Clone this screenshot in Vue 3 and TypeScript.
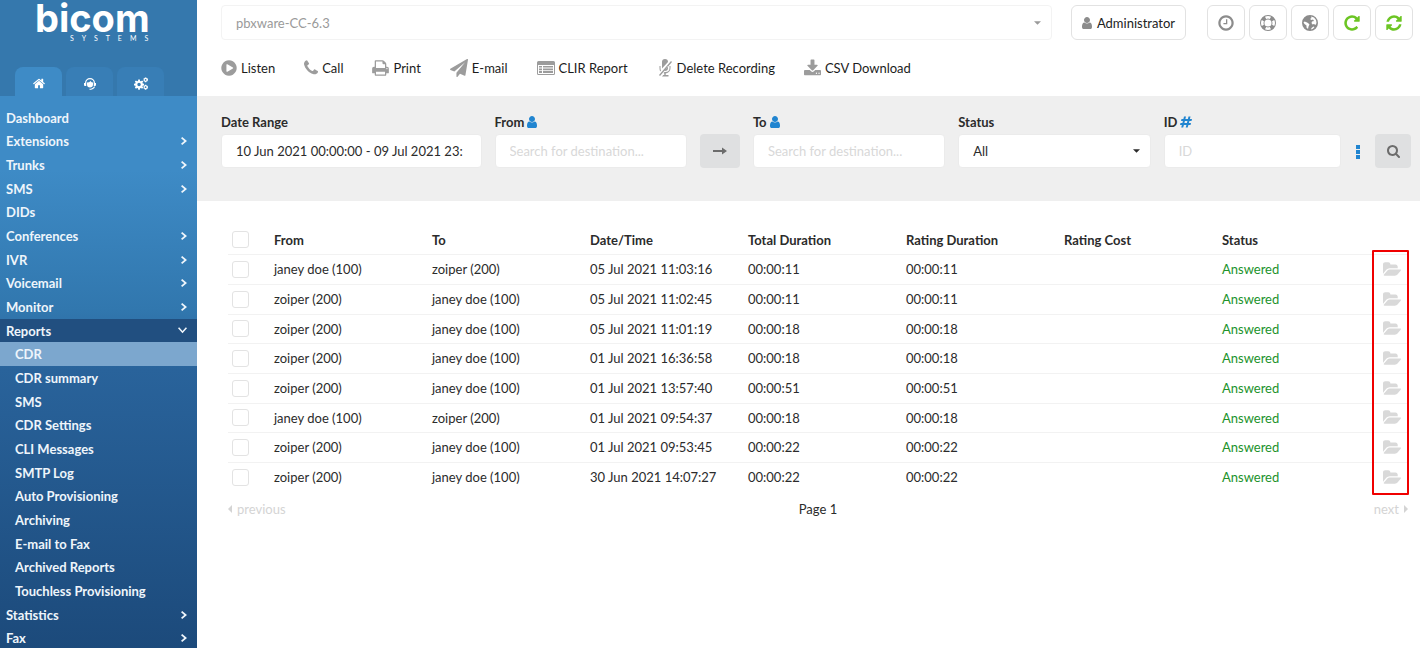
<script setup lang="ts">
import { h, ref, type FunctionalComponent } from 'vue'

interface IconShape {
  box: string
  d: string
}

const shapes: Record<string, IconShape> = {
  home: {
    box: '0 0 1664 1792',
    d: 'M1408 992v480q0 26-19 45t-45 19h-384v-384h-256v384h-384q-26 0-45-19t-19-45v-480q0-1 .5-3t.5-3l575-474 575 474q1 2 1 6zm223-69l-62 74q-8 9-21 11h-3q-13 0-21-7l-692-577-692 577q-12 8-24 7-13-2-21-11l-62-74q-8-10-7-23.5t11-21.5l719-599q32-26 76-26t76 26l244 204v-195q0-14 9-23t23-9h192q14 0 23 9t9 23v408l219 182q10 8 11 21.5t-7 23.5z',
  },
  agent: {
    box: '0 0 26 26',
    d: 'M3 12A10 10 0 0 1 23 12H20.500A7.500 7.500 0 0 0 5.500 12ZM1 12H5.500V18H3Q1 18 1 16ZM20.500 12H25V16Q25 18 23 18H20.500ZM7 11Q12 11 14 8Q16 11 19 11V15Q19 21 13 21T7 15ZM21 19H23Q22 24 15 25.500H12V23.500H15Q20 22 21 19Z',
  },
  cogs: {
    box: '-2 0 32 28',
    d: 'M7.600 5H11.400L11.900 8 14 8.900 16.500 7.100 19.100 9.700 17.300 12.200 18.100 14.200 21 14.700V18.300L18.100 18.800 17.300 20.800 19.100 23.300 16.500 25.900 14 24.100 11.900 25 11.400 28H7.600L7.100 25 5 24.100 2.500 25.900 0 23.300 1.700 20.800.9 18.800-2 18.300V14.700L.9 14.200 1.700 12.200 0 9.700 2.500 7.100 5 8.900 7.100 8ZM9.500 12.500A4 4 0 1 0 9.500 20.500 4 4 0 1 0 9.500 12.500ZM20 2H22L23 0H26L27 2H29L30 5 29 9H27L26 11H23L22 9H20ZM24.500 3.500A2 2 0 1 0 24.500 7.500 2 2 0 1 0 24.500 3.500ZM20 19H22L23 17H26L27 19H29L30 22 29 26H27L26 28H23L22 26H20ZM24.500 20.500A2 2 0 1 0 24.500 24.500 2 2 0 1 0 24.500 20.500Z',
  },
  play: {
    box: '0 0 1536 1792',
    d: 'M768 128q209 0 385.500 103t279.500 279.500 103 385.500-103 385.500-279.500 279.500-385.500 103-385.500-103-279.500-279.500-103-385.500 103-385.500 279.500-279.500 385.500-103zm384 823q32-18 32-55t-32-55l-544-320q-31-19-64-1-32 19-32 56v640q0 37 32 56 16 8 32 8 17 0 32-9z',
  },
  phone: {
    box: '0 0 1408 1792',
    d: 'M1408 1240q0 27-10 70.500t-21 68.500q-21 50-122 106-94 51-186 51-27 0-53-3.500t-57.500-12.500-47-14.500-55.500-20.500-49-18q-98-35-175-83-127-79-264-216t-216-264q-48-77-83-175-3-9-18-49t-20.500-55.500-14.500-47-12.500-57.500-3.500-53q0-92 51-186 56-101 106-122 25-11 68.500-21t70.500-10q14 0 21 3 18 6 53 76 11 19 30 54t35 63.500 31 53.500q3 4 17.500 25t21.500 35.500 7 28.500q0 20-28.500 50t-62 55-62 53-28.500 46q0 9 5 22.500t8.500 20.500 14 24 11.500 19q76 137 174 235t235 174q2 1 19 11.500t24 14 20.500 8.500 22.500 5q18 0 46-28.500t53-62 55-62 50-28.500q14 0 28.500 7t35.500 21.500 25 17.500q25 15 53.500 31t63.500 35 54 30q70 35 76 53 3 7 3 21z',
  },
  print: {
    box: '0 0 1664 1792',
    d: 'M384 1536h896v-256h-896v256zm0-640h896v-384h-160q-40 0-68-28t-28-68v-160h-640v640zm1152 64q0-26-19-45t-45-19-45 19-19 45 19 45 45 19 45-19 19-45zm128 0v416q0 13-9.500 22.500t-22.500 9.500h-224v160q0 40-28 68t-68 28h-960q-40 0-68-28t-28-68v-160h-224q-13 0-22.500-9.500t-9.500-22.500v-416q0-79 56.500-135.500t135.500-56.500h64v-544q0-40 28-68t68-28h672q40 0 88 20t76 48l152 152q28 28 48 76t20 88v256h64q79 0 135.500 56.500t56.500 135.500z',
  },
  plane: {
    box: '0 0 1792 1792',
    d: 'M1764 11q33 24 27 64l-256 1536q-5 29-32 45-14 8-31 8-11 0-24-5l-453-185-242 295q-18 23-49 23-13 0-22-4-19-7-30.500-23.500t-11.500-36.500v-349l864-1059-1069 925-395-162q-37-14-40-55-2-40 32-59l1664-960q15-9 32-9 20 0 36 11z',
  },
  report: {
    box: '0 0 18 16',
    d: 'M1.500 1H16.500Q18 1 18 2.500V13.500Q18 15 16.500 15H1.500Q0 15 0 13.500V2.500Q0 1 1.500 1ZM1 5V13.500Q1 14 1.500 14H16.500Q17 14 17 13.500V5ZM2 6H5V7.600H2ZM2 8.400H5V10.200H2ZM2 11H5V13H2ZM6 6H16V7.600H6ZM6 8.400H16V10.200H6ZM6 11H16V13H6Z',
  },
  mute: {
    box: '0 0 14 18',
    d: 'M7 0Q10 0 10 3L4 9.500V3Q4 0 7 0ZM13 2L14 3 2 17 1 16ZM10 7V9Q10 12 7 12L6.500 12ZM1.500 7H2.500V9Q2.500 10.500 3 11.500L2.200 12.500Q1.500 11 1.500 9ZM11.500 7H12.500V9Q12.500 13.500 7.700 14.400V16H10.500V17.500H4L5.300 16H6.300V14.400L5.500 14 6.500 13Q11.500 13.500 11.500 9Z',
  },
  download: {
    box: '0 0 1664 1664',
    d: 'M1280 1344q0-26-19-45t-45-19-45 19-19 45 19 45 45 19 45-19 19-45zm256 0q0-26-19-45t-45-19-45 19-19 45 19 45 45 19 45-19 19-45zm128-224v320q0 40-28 68t-68 28h-1472q-40 0-68-28t-28-68v-320q0-40 28-68t68-28h465l135 136q58 56 136 56t136-56l136-136h464q40 0 68 28t28 68zm-325-569q17 41-14 70l-448 448q-18 19-45 19t-45-19l-448-448q-31-29-14-70 17-39 59-39h256v-448q0-26 19-45t45-19h256q26 0 45 19t19 45v448h256q42 0 59 39z',
  },
  user: {
    box: '0 0 1280 1792',
    d: 'M1280 1399q0 109-62.500 187t-150.500 78h-854q-88 0-150.500-78t-62.500-187q0-85 8.500-160.500t31.500-152 58.500-131 94-89 134.500-34.500q131 128 313 128t313-128q76 0 134.500 34.500t94 89 58.500 131 31.500 152 8.500 160.500zm-256-887q0 159-112.500 271.500t-271.500 112.500-271.500-112.500-112.500-271.500 112.500-271.500 271.500-112.500 271.500 112.500 112.500 271.500z',
  },
  clock: {
    box: '0 0 1536 1792',
    d: 'M896 544v448q0 14-9 23t-23 9h-320q-14 0-23-9t-9-23v-64q0-14 9-23t23-9h224v-352q0-14 9-23t23-9h64q14 0 23 9t9 23zm416 352q0-148-73-273t-198-198-273-73-273 73-198 198-73 273 73 273 198 198 273 73 273-73 198-198 73-273zm224 0q0 209-103 385.500t-279.500 279.500-385.500 103-385.500-103-279.500-279.500-103-385.500 103-385.500 279.500-279.500 385.500-103 385.500 103 279.500 279.500 103 385.500z',
  },
  ring: {
    box: '0 0 18 18',
    d: 'M9 0A9 9 0 1 0 9 18 9 9 0 1 0 9 0ZM9 5A4 4 0 1 1 9 13 4 4 0 1 1 9 5ZM5.600 2L7 4.400Q9 3.600 11 4.400L12.400 2Q9 .3 5.600 2ZM5.600 16Q9 17.700 12.400 16L11 13.600Q9 14.400 7 13.600ZM2 5.600Q.3 9 2 12.400L4.400 11Q3.600 9 4.400 7ZM16 5.600L13.600 7Q14.400 9 13.600 11L16 12.400Q17.700 9 16 5.600Z',
  },
  globe: {
    box: '0 0 16 16',
    d: 'M8 0A8 8 0 1 0 8 16 8 8 0 1 0 8 0ZM9 1.500L12 2.500 14 5 14.500 8 13.500 10 12 9 10.500 9.500 9.500 8 10 6.500 12 6 11 4.500 9.500 5 8 4 9.500 3ZM2.500 6.500L4 7 6 8 7.500 9.500 6.500 11.500 6 14 4.500 12.500 4.500 10.500 2.500 9 1.500 7.500ZM9.500 13L11.500 11.500 12.500 12 11 13.800 9 14.500Z',
  },
  repeat: {
    box: '0 0 1536 1792',
    d: 'M1536 256v448q0 26-19 45t-45 19h-448q-42 0-59-40-17-39 14-69l138-138q-148-137-349-137-104 0-198.500 40.500t-163.500 109.500-109.500 163.500-40.500 198.500 40.500 198.500 109.500 163.500 163.500 109.500 198.500 40.500q119 0 225-52t179-147q7-10 23-12 15 0 25 9l137 138q9 8 9.500 20.500t-7.500 22.500q-109 132-264 204.500t-327 72.500q-156 0-298-61t-245-164-164-245-61-298 61-298 164-245 245-164 298-61q147 0 284.500 55.500t244.500 156.500l130-129q29-31 70-14 39 17 39 59z',
  },
  refresh: {
    box: '0 0 1536 1792',
    d: 'M1511 1056q0 5-1 7-64 268-268 434.500t-478 166.500q-146 0-282.500-55t-243.500-157l-129 129q-19 19-45 19t-45-19-19-45v-448q0-26 19-45t45-19h448q26 0 45 19t19 45-19 45l-137 137q71 66 161 102t187 36q134 0 250-65t186-179q11-17 53-117 8-23 30-23h192q13 0 22.500 9.500t9.500 22.500zm25-800v448q0 26-19 45t-45 19h-448q-26 0-45-19t-19-45 19-45l138-138q-148-137-349-137-134 0-250 65t-186 179q-11 17-53 117-8 23-30 23h-199q-13 0-22.500-9.500t-9.500-22.500v-7q65-268 270-434.500t480-166.500q146 0 284 55.500t245 156.500l130-129q19-19 45-19t45 19 19 45z',
  },
  search: {
    box: '0 0 1664 1792',
    d: 'M1152 832q0-185-131.500-316.500t-316.500-131.500-316.500 131.500-131.500 316.500 131.500 316.500 316.500 131.500 316.500-131.500 131.500-316.500zm512 832q0 52-38 90t-90 38q-54 0-90-38l-343-342q-179 124-399 124-143 0-273.500-55.500t-225-150-150-225-55.500-273.500 55.500-273.500 150-225 225-150 273.500-55.500 273.500 55.500 225 150 150 225 55.500 273.500q0 220-124 399l343 343q37 37 37 90z',
  },
  folder: {
    box: '0 128 1879 1536',
    d: 'M1879 952q0 31-31 66l-336 396q-43 51-120.500 86.500t-143.500 35.500h-1088q-34 0-60.500-13t-26.500-43q0-31 31-66l336-396q43-51 120.500-86.500t143.500-35.500h1088q34 0 60.500 13t26.500 43zm-343-344v160h-832q-94 0-197 47.500t-164 119.500l-337 396-5 6q0-4-.5-12.500t-.5-12.500v-960q0-92 66-158t158-66h320q92 0 158 66t66 158v32h544q92 0 158 66t66 158z',
  },
  hash: {
    box: '0 0 12 12',
    d: 'M4 .5H6L5.400 3H7.900L8.500 .5H10.500L9.900 3H12L11.500 5H9.400L8.900 7H11L10.500 9H8.400L7.700 11.500H5.700L6.400 9H3.900L3.200 11.500H1.200L1.900 9H0L.5 7H2.400L2.900 5H1L1.500 3H3.400ZM4.900 5L4.400 7H6.900L7.400 5Z',
  },
  arrow: { box: '0 0 14 8', d: 'M0 3H9V0.500L14 4 9 7.500V5H0Z' },
  dots: { box: '0 0 4 14', d: 'M0 0H4V4H0ZM0 5H4V9H0ZM0 10H4V14H0Z' },
  caret: { box: '0 0 8 4', d: 'M0 0H8L4 4Z' },
  left: { box: '0 0 4 8', d: 'M4 0V8L0 4Z' },
  right: { box: '0 0 4 8', d: 'M0 0V8L4 4Z' },
  chevron: { box: '0 0 6 8', d: 'M1.200 0L6 4 1.200 8 0 6.800 3.200 4 0 1.200Z' },
  chevronDown: { box: '0 0 8 6', d: 'M0 1L1 0 4 3.500 7 0 8 1 4 5.500Z' },
}

const Icon: FunctionalComponent<{ name: string }> = (props) =>
  h('svg', { viewBox: shapes[props.name].box, class: 'icon', 'aria-hidden': 'true' }, [
    h('path', { d: shapes[props.name].d, fill: 'currentColor', 'fill-rule': 'evenodd' }),
  ])
Icon.props = ['name']

interface MenuItem {
  label: string
  kind?: 'parent' | 'open' | 'sub' | 'current'
}

const menu: MenuItem[] = [
  { label: 'Dashboard' },
  { label: 'Extensions', kind: 'parent' },
  { label: 'Trunks', kind: 'parent' },
  { label: 'SMS', kind: 'parent' },
  { label: 'DIDs' },
  { label: 'Conferences', kind: 'parent' },
  { label: 'IVR', kind: 'parent' },
  { label: 'Voicemail', kind: 'parent' },
  { label: 'Monitor', kind: 'parent' },
  { label: 'Reports', kind: 'open' },
  { label: 'CDR', kind: 'current' },
  { label: 'CDR summary', kind: 'sub' },
  { label: 'SMS', kind: 'sub' },
  { label: 'CDR Settings', kind: 'sub' },
  { label: 'CLI Messages', kind: 'sub' },
  { label: 'SMTP Log', kind: 'sub' },
  { label: 'Auto Provisioning', kind: 'sub' },
  { label: 'Archiving', kind: 'sub' },
  { label: 'E-mail to Fax', kind: 'sub' },
  { label: 'Archived Reports', kind: 'sub' },
  { label: 'Touchless Provisioning', kind: 'sub' },
  { label: 'Statistics', kind: 'parent' },
  { label: 'Fax', kind: 'parent' },
]

const tabs = [
  { icon: 'home', label: 'Home' },
  { icon: 'agent', label: 'Agents' },
  { icon: 'cogs', label: 'Settings' },
]

const tools = [
  { icon: 'clock', label: 'Time' },
  { icon: 'ring', label: 'Help' },
  { icon: 'globe', label: 'Language' },
  { icon: 'repeat', label: 'Reload', green: true },
  { icon: 'refresh', label: 'Refresh', green: true },
]

const actions = [
  { icon: 'play', label: 'Listen' },
  { icon: 'phone', label: 'Call' },
  { icon: 'print', label: 'Print' },
  { icon: 'plane', label: 'E-mail' },
  { icon: 'report', label: 'CLIR Report' },
  { icon: 'mute', label: 'Delete Recording' },
  { icon: 'download', label: 'CSV Download' },
]

const janey = 'janey doe (100)'
const zoiper = 'zoiper (200)'
const calls = [
  { from: janey, to: zoiper, at: '05 Jul 2021 11:03:16', time: '00:00:11' },
  { from: zoiper, to: janey, at: '05 Jul 2021 11:02:45', time: '00:00:11' },
  { from: zoiper, to: janey, at: '05 Jul 2021 11:01:19', time: '00:00:18' },
  { from: zoiper, to: janey, at: '01 Jul 2021 16:36:58', time: '00:00:18' },
  { from: zoiper, to: janey, at: '01 Jul 2021 13:57:40', time: '00:00:51' },
  { from: janey, to: zoiper, at: '01 Jul 2021 09:54:37', time: '00:00:18' },
  { from: zoiper, to: janey, at: '01 Jul 2021 09:53:45', time: '00:00:22' },
  { from: zoiper, to: janey, at: '30 Jun 2021 14:07:27', time: '00:00:22' },
]

const range = ref('10 Jun 2021 00:00:00 - 09 Jul 2021 23:59:59')
const from = ref('')
const to = ref('')
const id = ref('')
</script>

<template>
  <div class="app">
    <aside class="sidebar">
      <header class="brand">
        <div class="logo">
          <span class="logo-name">bicom</span>
          <span class="logo-sub">SYSTEMS</span>
        </div>
        <div class="tabs">
          <button v-for="(tab, i) in tabs" :key="tab.icon" type="button" class="tab" :class="{ active: i === 0 }" :aria-label="tab.label">
            <Icon :name="tab.icon" />
          </button>
        </div>
      </header>
      <nav>
        <ul class="menu">
          <li v-for="(item, i) in menu" :key="i">
            <a href="#" :class="item.kind">
              {{ item.label }}
              <Icon v-if="item.kind === 'parent'" name="chevron" class="chevron" />
              <Icon v-if="item.kind === 'open'" name="chevronDown" class="chevron-down" />
            </a>
          </li>
        </ul>
      </nav>
    </aside>

    <main class="main">
      <div class="topbar">
        <div class="picker server">
          <select aria-label="Server">
            <option>pbxware-CC-6.3</option>
          </select>
          <Icon name="caret" class="caret" />
        </div>
        <button type="button" class="box admin"><Icon name="user" />Administrator</button>
        <div class="tools">
          <button v-for="tool in tools" :key="tool.icon" type="button" class="box tool" :class="{ green: tool.green }" :aria-label="tool.label">
            <Icon :name="tool.icon" />
          </button>
        </div>
      </div>

      <div class="actions">
        <button v-for="action in actions" :key="action.icon" type="button" class="action">
          <Icon :name="action.icon" :class="action.icon" />{{ action.label }}
        </button>
      </div>

      <form class="filters" @submit.prevent>
        <div class="field">
          <label for="range">Date Range</label>
          <input id="range" v-model="range" type="text" class="range" />
        </div>
        <div class="field">
          <label for="from">From <Icon name="user" class="mark" /></label>
          <input id="from" v-model="from" type="text" placeholder="Search for destination..." />
        </div>
        <button type="button" class="solid" aria-label="Copy to destination"><Icon name="arrow" class="arrow" /></button>
        <div class="field">
          <label for="to">To <Icon name="user" class="mark" /></label>
          <input id="to" v-model="to" type="text" placeholder="Search for destination..." />
        </div>
        <div class="field">
          <label for="status">Status</label>
          <div class="picker">
            <select id="status">
              <option>All</option>
            </select>
            <Icon name="caret" class="caret" />
          </div>
        </div>
        <div class="field">
          <label for="call-id">ID <Icon name="hash" class="hash" /></label>
          <input id="call-id" v-model="id" type="text" placeholder="ID" />
        </div>
        <button type="button" class="more" aria-label="More filters"><Icon name="dots" class="dots" /></button>
        <button type="submit" class="solid" aria-label="Search"><Icon name="search" class="search" /></button>
      </form>

      <section class="results">
        <table>
          <colgroup>
            <col class="edge" />
            <col v-for="n in 7" :key="n" />
            <col class="edge" />
          </colgroup>
          <thead>
            <tr>
              <th><input type="checkbox" aria-label="Select all" /></th>
              <th>From</th>
              <th>To</th>
              <th>Date/Time</th>
              <th>Total Duration</th>
              <th>Rating Duration</th>
              <th>Rating Cost</th>
              <th>Status</th>
              <th></th>
            </tr>
          </thead>
          <tbody>
            <tr v-for="call in calls" :key="call.at">
              <td><input type="checkbox" :aria-label="'Select call ' + call.at" /></td>
              <td>{{ call.from }}</td>
              <td>{{ call.to }}</td>
              <td>{{ call.at }}</td>
              <td>{{ call.time }}</td>
              <td>{{ call.time }}</td>
              <td></td>
              <td class="answered">Answered</td>
              <td class="open">
                <button type="button" aria-label="Open recording"><Icon name="folder" class="folder" /></button>
              </td>
            </tr>
          </tbody>
        </table>
        <div class="highlight"></div>
      </section>
      <footer class="pager">
        <button type="button" disabled><Icon name="left" />previous</button>
        <span>Page 1</span>
        <button type="button" disabled>next<Icon name="right" /></button>
      </footer>
    </main>
  </div>
</template>

<style>
body {
  margin: 0;
  background: #fff;
}
</style>

<style scoped>
* {
  box-sizing: border-box;
}
.app {
  display: flex;
  height: 100vh;
  overflow: hidden;
  font: 13px/18px Lato, 'Liberation Sans', sans-serif;
  color: #2b2b2b;
}
button,
input,
select {
  font: inherit;
  color: inherit;
  margin: 0;
}
button {
  display: flex;
  align-items: center;
  border: 0;
  padding: 0;
  background: none;
  cursor: pointer;
}
.icon {
  display: block;
  flex: none;
}

.sidebar {
  flex: none;
  width: 197px;
  background: linear-gradient(#3e8bc6 0, #3e8bc6 170px, #3177ae 310px, #29639b 370px, #1c4a7b 648px);
}
.brand {
  display: flex;
  flex-direction: column;
  justify-content: space-between;
  height: 96px;
  background: #3578ad;
}
.logo {
  display: flex;
  flex-direction: column;
  align-self: flex-start;
  margin-left: 35px;
  color: #fff;
}
.logo-name {
  font-family: Inter, Lato, sans-serif;
  font-size: 38px;
  font-weight: 700;
  line-height: 36px;
}
.logo-sub {
  padding-left: 35px;
  font-size: 7px;
  line-height: 5px;
  letter-spacing: 8px;
}
.tabs {
  display: flex;
  gap: 4px;
  padding-left: 15px;
}
.tab {
  justify-content: center;
  width: 47px;
  height: 29px;
  padding-top: 4px;
  border-radius: 8px 8px 0 0;
  background: #387eb6;
  color: #fff;
}
.tab.active {
  background: #3e8bc6;
}
.tab .icon {
  width: 14px;
  height: 13px;
}
.menu {
  list-style: none;
  margin: 0;
  padding: 10px 0 0;
}
.menu li {
  height: 24px;
}
.menu li:nth-child(3n + 1) {
  height: 23px;
}
.menu a {
  display: flex;
  align-items: center;
  justify-content: space-between;
  height: 100%;
  padding: 0 10px 0 6px;
  color: #eef5fb;
  font-weight: 700;
  text-decoration: none;
}
.menu a.sub,
.menu a.current {
  padding-left: 15px;
}
.menu a.open {
  background: #214f80;
}
.menu a.current {
  background: #7ca7ce;
}
.chevron {
  width: 6px;
  height: 8px;
}
.chevron-down {
  width: 9px;
  height: 7px;
}

.main {
  flex: 1;
  min-width: 0;
}
.topbar {
  display: flex;
  padding: 5px 7px 0 24px;
}
.picker {
  display: grid;
  align-items: center;
}
.picker > * {
  grid-area: 1 / 1;
}
.picker .caret {
  justify-self: end;
  width: 7px;
  height: 4px;
  margin-right: 11px;
  pointer-events: none;
}
.server {
  flex: 1;
  margin-right: 19px;
  color: #9a9a9a;
}
select,
input[type='text'] {
  appearance: none;
  width: 100%;
  height: 35px;
  padding: 0 14px;
  border: 1px solid #ebebeb;
  border-radius: 4px;
  background: #fff;
  outline: 0;
}
input.range[type='text'] {
  padding-right: 18px;
}
.server select {
  border-color: #f3f3f3;
}
.box {
  justify-content: center;
  height: 35px;
  border: 1px solid #e2e2e2;
  border-radius: 6px;
  background: #fff;
  color: #8c8c8c;
}
.admin {
  gap: 5px;
  width: 115px;
  color: #222;
}
.admin .icon {
  width: 10px;
  height: 14px;
  color: #8c8c8c;
}
.tools {
  display: flex;
  gap: 4px;
  margin-left: 21px;
}
.tool {
  width: 38px;
}
.tool .icon {
  width: 16px;
  height: 18px;
}
.tool.green {
  color: #6cc524;
}
.actions {
  display: flex;
  gap: 29px;
  height: 56px;
  padding-left: 24px;
}
.action {
  gap: 4px;
  color: #1c1c1c;
}
.action .icon {
  width: 16px;
  height: 18px;
  color: #9c9c9c;
}
.action .icon.phone {
  width: 14px;
}
.action .icon.print,
.action .icon.download {
  width: 17px;
}
.action .icon.plane,
.action .icon.report {
  width: 18px;
}

.filters {
  display: grid;
  grid-template-columns: 260fr 192fr 40px 192fr 192fr 177fr 8px 36px;
  gap: 13px;
  align-items: end;
  padding: 16px 9px 33px 24px;
  background: #efefef;
}
.field label {
  display: flex;
  align-items: center;
  gap: 3px;
  height: 20px;
  margin-bottom: 2px;
  font-weight: 700;
}
.field input,
.field select,
.solid,
.more {
  height: 34px;
}
.field .picker {
  height: 34px;
}
.mark {
  width: 10px;
  height: 14px;
  color: #2185d0;
}
.hash {
  width: 12px;
  height: 12px;
  color: #2185d0;
}
input::placeholder {
  color: #d8d8d8;
  opacity: 1;
}
.solid {
  justify-content: center;
  border-radius: 4px;
  background: #dfe0e1;
  color: #6c6c6c;
}
.arrow {
  width: 14px;
  height: 8px;
}
.search {
  width: 13px;
  height: 14px;
}
.more {
  justify-content: center;
  padding-top: 2px;
  color: #2185d0;
}
.dots {
  width: 4px;
  height: 14px;
}

.results {
  position: relative;
  margin: 25px 12px 0 31px;
}
table {
  width: 100%;
  table-layout: fixed;
  border-collapse: collapse;
}
.edge {
  width: 37px;
}
th,
td {
  padding: 0 0 0 9px;
  text-align: left;
  white-space: nowrap;
}
tr {
  height: 30px;
}
thead tr {
  height: 28px;
}
tbody tr:nth-child(3n) {
  height: 29px;
}
tbody tr {
  border-top: 1px solid #f2f2f2;
}
th:first-child,
td:first-child {
  padding-left: 4px;
}
input[type='checkbox'] {
  appearance: none;
  display: block;
  width: 17px;
  height: 17px;
  border: 1px solid #e3e3e3;
  border-radius: 3px;
  background: #fff;
}
.answered {
  color: #21922b;
}
.open {
  padding-left: 12px;
  color: #d9d9d9;
}
.folder {
  width: 18px;
  height: 15px;
}
.highlight {
  position: absolute;
  top: 24px;
  right: -1px;
  bottom: -3px;
  width: 37px;
  border: 2px solid #f00000;
  border-radius: 1px;
  pointer-events: none;
}
.pager {
  display: grid;
  grid-template-columns: 1fr auto 1fr;
  margin: 8px 12px 0 31px;
}
.pager button {
  gap: 5px;
  color: #d4d4d4;
}
.pager button:last-child {
  justify-self: end;
}
.pager .icon {
  width: 4px;
  height: 8px;
}
</style>
